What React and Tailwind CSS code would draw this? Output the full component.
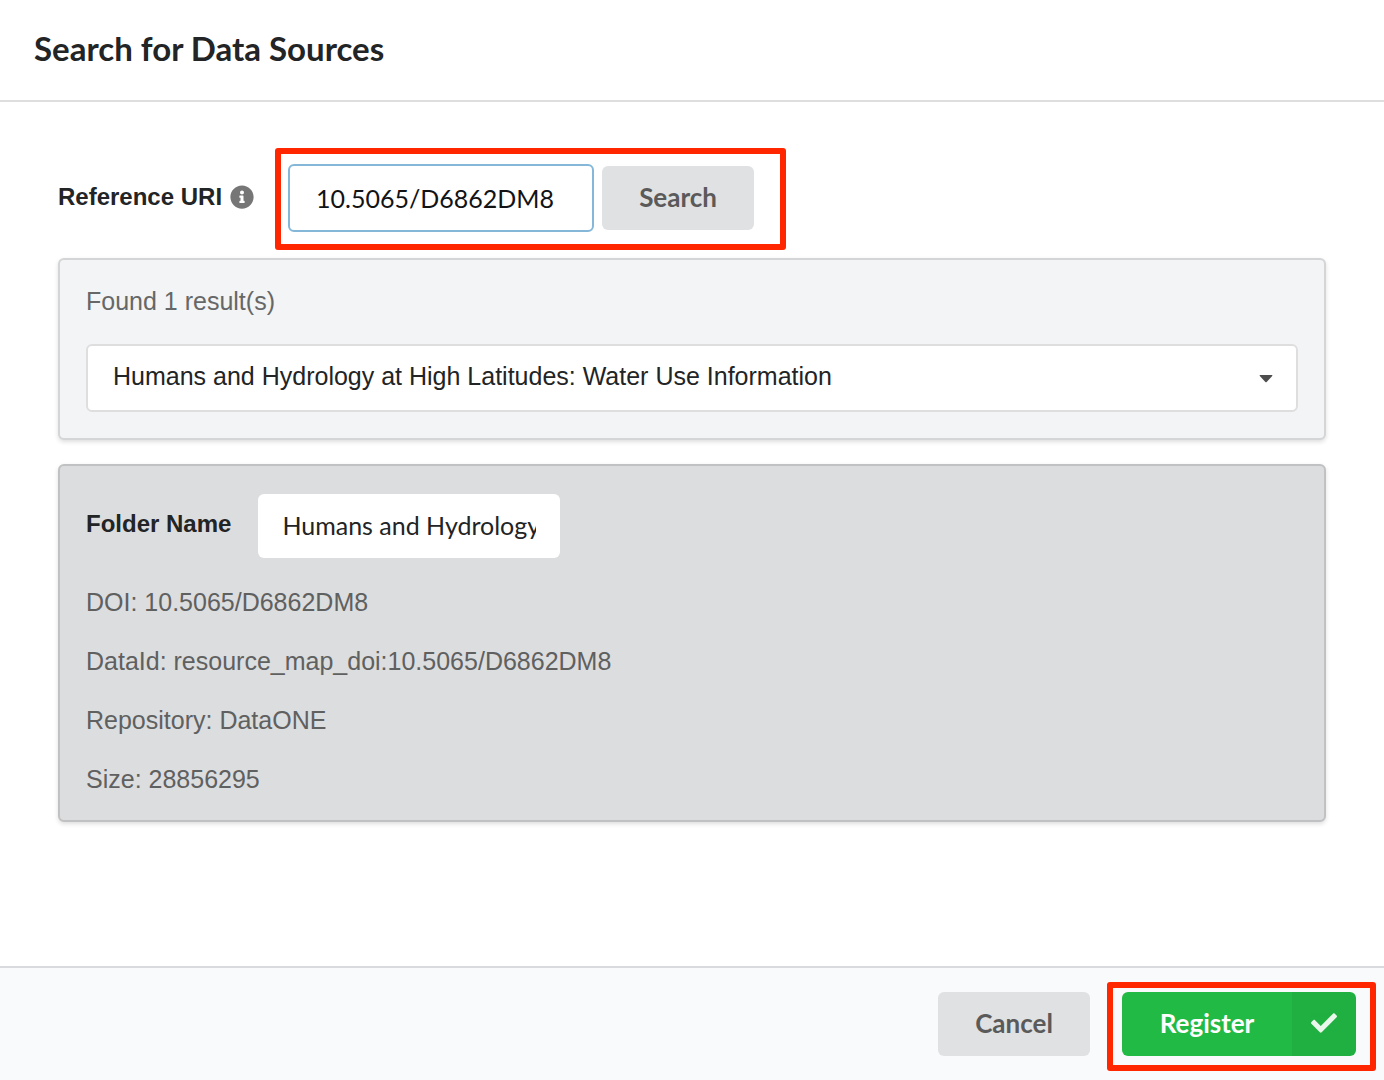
import { useState } from "react";
import { FaInfoCircle, FaCheck } from "react-icons/fa";

const details = [
  "DOI: 10.5065/D6862DM8",
  "DataId: resource_map_doi:10.5065/D6862DM8",
  "Repository: DataONE",
  "Size: 28856295",
];

function GrayButton({ children }) {
  return (
    <button
      type="button"
      className="h-16 w-[152px] shrink-0 rounded-md bg-[#e0e1e2] pb-0.5 text-[26px] leading-8 font-bold text-[#5a5a5a]"
    >
      {children}
    </button>
  );
}

export default function App() {
  const [uri, setUri] = useState("10.5065/D6862DM8");
  const [folder, setFolder] = useState(
    "Humans and Hydrology at High Latitudes: Water Use Information"
  );

  return (
    <div className="flex min-h-screen flex-col bg-white font-['Lato',sans-serif] text-[#222425]">
      <header className="border-b-2 border-[#dededf] px-[34px] pt-7 pb-8">
        <h1 className="text-[33px] leading-10 font-bold">Search for Data Sources</h1>
      </header>

      <main className="flex-1 px-[58px] pt-[46px] pb-9 font-['Liberation_Sans',sans-serif]">
        <div className="mb-2 flex items-center">
          <div className="flex items-center gap-2 pr-[21px] pb-1">
            <label htmlFor="uri" className="text-2xl leading-8 font-bold">
              Reference URI
            </label>
            <FaInfoCircle className="size-6 text-[#767676]" aria-hidden="true" />
          </div>
          <div className="flex items-center gap-2 rounded-[3px] border-6 border-[#ff2600] pt-2.5 pr-[26px] pb-3 pl-[7px] font-['Lato',sans-serif]">
            <input
              id="uri"
              type="text"
              value={uri}
              onChange={(e) => setUri(e.target.value)}
              className="h-[68px] w-[306px] rounded-md border-2 border-[#85b7d9] bg-white px-[26px] text-[25px] text-[#121314] outline-none"
            />
            <GrayButton>Search</GrayButton>
          </div>
        </div>

        <section className="mb-6 rounded-md border-2 border-[#d4d5d6] bg-[#f3f4f5] px-[26px] pt-[25px] pb-[26px] shadow-[0_2px_4px_rgba(34,36,38,0.15)]">
          <label htmlFor="result" className="mb-[27px] block text-[25px] leading-8 text-[#666767]">
            Found 1 result(s)
          </label>
          <div className="relative">
            <select
              id="result"
              className="block h-[68px] w-full appearance-none rounded-md border-2 border-[#dededf] bg-white pr-16 pb-0.5 pl-[25px] text-[25px] text-[#222425] outline-none"
            >
              <option>Humans and Hydrology at High Latitudes: Water Use Information</option>
            </select>
            <svg
              viewBox="0 0 14 8"
              className="pointer-events-none absolute top-[31px] right-[25px] h-2 w-3.5 fill-[#4d4d4d]"
              aria-hidden="true"
            >
              <path d="M1.2 0h11.6q1 .4.4 1.1L7.6 7.1q-.6.5-1.2 0L.8 1.1Q.2.4 1.2 0Z" />
            </svg>
          </div>
        </section>

        <section className="rounded-md border-2 border-[#c0c1c2] bg-[#dcddde] px-[26px] pt-7 pb-[25px] shadow-[0_2px_4px_rgba(34,36,38,0.15)]">
          <div className="mb-7 flex items-center gap-[27px]">
            <label htmlFor="folder" className="pb-1 text-2xl leading-8 font-bold">
              Folder Name
            </label>
            <input
              id="folder"
              type="text"
              value={folder}
              onChange={(e) => setFolder(e.target.value)}
              className="h-16 w-[302px] rounded-md bg-white px-6 pb-0.5 font-['Lato',sans-serif] text-[25px] outline-none"
            />
          </div>
          <div className="flex flex-col gap-[27px] text-[25px] leading-8 text-[#5f6060]">
            {details.map((line) => (
              <p key={line}>{line}</p>
            ))}
          </div>
        </section>
      </main>

      <footer className="flex items-start justify-end border-t-2 border-[#d8dade] bg-[#f9fafb] pt-3.5 pr-2 pb-[9px]">
        <div className="pt-2.5">
          <GrayButton>Cancel</GrayButton>
        </div>
        <div className="ml-[17px] rounded-[3px] border-6 border-[#ff2600] pt-1 pr-3.5 pb-[9px] pl-[9px]">
          <button
            type="button"
            className="flex h-16 w-[234px] overflow-hidden rounded-md bg-[#21ba45] text-[26px] leading-8 font-bold text-white"
          >
            <span className="flex h-full flex-1 items-center justify-center pb-0.5">Register</span>
            <span className="flex h-full w-16 items-center justify-center bg-black/5 pb-0.5">
              <FaCheck className="size-[26px] opacity-90" aria-hidden="true" />
            </span>
          </button>
        </div>
      </footer>
    </div>
  );
}
